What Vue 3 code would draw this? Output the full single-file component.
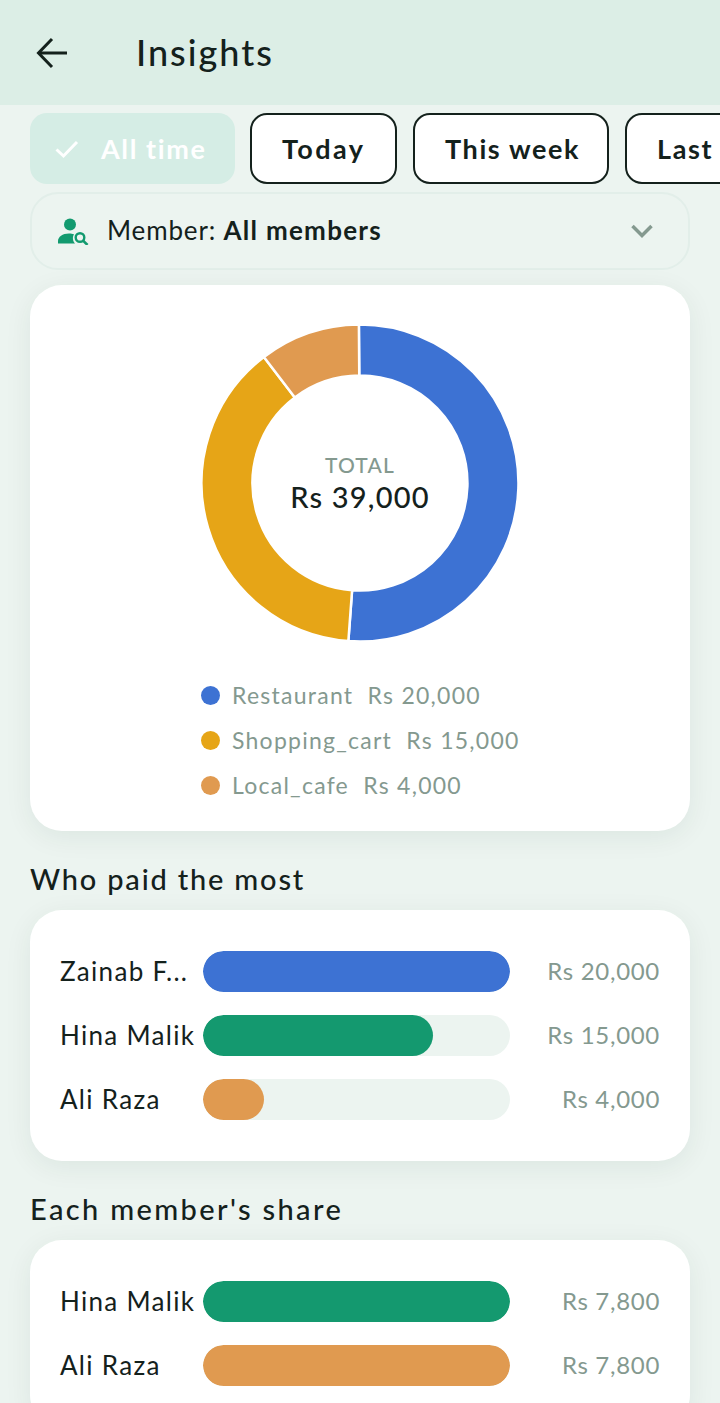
<script setup>
const chips = ['Today', 'This week', 'Last month']

const slices = [
  { name: 'Restaurant', amount: 20000, color: '#3d72d3' },
  { name: 'Shopping_cart', amount: 15000, color: '#e6a517' },
  { name: 'Local_cafe', amount: 4000, color: '#e09a50' },
]
const total = slices.reduce((sum, s) => sum + s.amount, 0)

const fmt = (n) => 'Rs ' + n.toLocaleString('en-US')

// donut segments, clockwise from 12 o'clock
const cx = 160
const cy = 160
const rOut = 158.5
const rIn = 107.5
const point = (r, a) => {
  const t = (a - 90) * Math.PI / 180
  return (cx + r * Math.cos(t)).toFixed(2) + ' ' + (cy + r * Math.sin(t)).toFixed(2)
}
let angle = -0.4
const segments = slices.map((s) => {
  const sweep = s.amount / total * 360
  const start = angle
  const end = angle + sweep
  angle = end
  const large = sweep > 180 ? 1 : 0
  return {
    color: s.color,
    d: `M${point(rOut, start)} A${rOut} ${rOut} 0 ${large} 1 ${point(rOut, end)} L${point(rIn, end)} A${rIn} ${rIn} 0 ${large} 0 ${point(rIn, start)} Z`,
  }
})

const paid = [
  { name: 'Zainab F...', amount: 20000, pct: 100, color: '#3d72d3' },
  { name: 'Hina Malik', amount: 15000, pct: 75, color: '#14996f' },
  { name: 'Ali Raza', amount: 4000, pct: 20, color: '#e09a50' },
]
const share = [
  { name: 'Hina Malik', amount: 7800, pct: 100, color: '#14996f' },
  { name: 'Ali Raza', amount: 7800, pct: 100, color: '#e09a50' },
]
</script>

<template>
  <div class="page">
    <header class="topbar">
      <svg class="back" width="34" height="34" viewBox="0 0 34 34" fill="none" stroke="#14211c" stroke-width="3">
        <path d="M32 17H4" />
        <path d="M17 3 3.500 17 17 31" />
      </svg>
      <h1>Insights</h1>
    </header>

    <div class="chips">
      <div class="chip active">
        <svg width="24" height="20" viewBox="0 0 24 20" fill="none" stroke="#fff" stroke-width="3">
          <path d="M1.500 10.500 8.500 17 22 3" />
        </svg>
        <span>All time</span>
      </div>
      <div v-for="c in chips" :key="c" class="chip">{{ c }}</div>
    </div>

    <div class="member">
      <svg width="32" height="28" viewBox="0 0 32 28" fill="#129a6f">
        <circle cx="13" cy="7.500" r="6" />
        <path d="M1 26.500v-2.500c0-4 4.500-7.500 11-7.500 2 0 3.500.3 5 .8-1.800 3-1.200 6.800 1 9.200H1Z" />
        <circle cx="23" cy="20.500" r="4.300" fill="none" stroke="#129a6f" stroke-width="2.400" />
        <path d="m26.300 23.800 4.200 4.200" fill="none" stroke="#129a6f" stroke-width="2.600" />
      </svg>
      <span class="member-text">Member: <b>All members</b></span>
      <svg class="chev" width="22" height="14" viewBox="0 0 22 14" fill="none" stroke="#84998f" stroke-width="3.500">
        <path d="M1.500 2 11 11.500 20.500 2" />
      </svg>
    </div>

    <section class="card donut-card">
      <div class="donut">
        <svg width="320" height="320" viewBox="0 0 320 320">
          <path v-for="s in segments" :key="s.color" :d="s.d" :fill="s.color" stroke="#fff" stroke-width="2.500" />
        </svg>
        <div class="donut-center">
          <div class="total-label">TOTAL</div>
          <div class="total-value">{{ fmt(total) }}</div>
        </div>
      </div>
      <ul class="legend">
        <li v-for="s in slices" :key="s.name">
          <i class="dot" :style="{ background: s.color }"></i>
          <span>{{ s.name }}&nbsp; {{ fmt(s.amount) }}</span>
        </li>
      </ul>
    </section>

    <h2>Who paid the most</h2>
    <section class="card bars">
      <div v-for="r in paid" :key="r.name" class="row">
        <span class="name">{{ r.name }}</span>
        <div class="track">
          <div class="fill" :style="{ width: r.pct + '%', background: r.color }"></div>
        </div>
        <span class="amount">{{ fmt(r.amount) }}</span>
      </div>
    </section>

    <h2 class="wide">Each member's share</h2>
    <section class="card bars">
      <div v-for="r in share" :key="r.name" class="row">
        <span class="name">{{ r.name }}</span>
        <div class="track">
          <div class="fill" :style="{ width: r.pct + '%', background: r.color }"></div>
        </div>
        <span class="amount">{{ fmt(r.amount) }}</span>
      </div>
    </section>
  </div>
</template>

<style scoped>
.page {
  width: 720px;
  height: 1403px;
  overflow: hidden;
  background: #ecf4f0;
  color: #14211c;
  font-family: Lato, "Noto Sans", sans-serif;
}

.topbar {
  height: 105px;
  background: #dceee6;
  display: flex;
  align-items: center;
  padding-left: 35px;
  gap: 67px;
  box-sizing: border-box;
}
.topbar h1 {
  margin: 0 0 2px;
  font-size: 36px;
  font-weight: 500;
  letter-spacing: 2px;
}

.chips {
  display: flex;
  gap: 16px;
  margin: 8px 0 0 30px;
  white-space: nowrap;
}
.chip {
  flex: none;
  height: 71px;
  box-sizing: border-box;
  border: 2px solid #14211c;
  border-radius: 17px;
  background: #fff;
  padding: 0 30px;
  display: flex;
  align-items: center;
  font-size: 27px;
  font-weight: 700;
  letter-spacing: 1.600px;
}
.chip:nth-child(2) {
  width: 147px;
  letter-spacing: 2.400px;
}
.chip:nth-child(3) {
  width: 196px;
}
.chip.active {
  width: 205px;
  border: none;
  background: #d5ede5;
  color: #fff;
  padding: 0 0 0 25px;
  gap: 22px;
  margin-right: -1px;
}

.member {
  margin: 8px 30px 0;
  height: 78px;
  box-sizing: border-box;
  border: 2px solid #e2eee9;
  border-radius: 28px;
  display: flex;
  align-items: center;
  padding: 0 35px 0 25px;
  gap: 18px;
}
.member-text {
  font-size: 26px;
  flex: 1;
  letter-spacing: 0.850px;
  padding-bottom: 2px;
}
.member-text b {
  font-weight: 700;
  letter-spacing: 1.270px;
}

.card {
  margin: 0 30px;
  background: #fff;
  border-radius: 32px;
  box-shadow: 0 6px 28px rgba(20, 60, 45, 0.07);
}

.donut-card {
  margin-top: 15px;
  height: 546px;
  box-sizing: border-box;
  padding-top: 37.500px;
  display: flex;
  flex-direction: column;
  align-items: center;
}
.donut {
  position: relative;
  width: 320px;
  height: 320px;
}
.donut-center {
  position: absolute;
  inset: 0;
  display: flex;
  flex-direction: column;
  align-items: center;
  justify-content: center;
}
.total-label {
  font-size: 21px;
  font-weight: 500;
  color: #84998f;
  letter-spacing: 1.200px;
}
.total-value {
  font-size: 29px;
  font-weight: 500;
  margin-top: 2px;
  letter-spacing: 1.200px;
}

.legend {
  list-style: none;
  margin: 30px 0 0 171px;
  padding: 0;
  align-self: flex-start;
}
.legend li {
  height: 45px;
  display: flex;
  align-items: center;
  gap: 12px;
  font-size: 23px;
  color: #84998f;
  letter-spacing: 1.250px;
}
.dot {
  width: 19px;
  height: 19px;
  border-radius: 50%;
}

h2 {
  margin: 30px 0 13px 30px;
  font-size: 29px;
  line-height: 36px;
  font-weight: 500;
  letter-spacing: 1.800px;
}
h2.wide {
  letter-spacing: 2.350px;
}

.bars {
  padding: 41px 30px;
  display: flex;
  flex-direction: column;
  gap: 23px;
}
.row {
  display: flex;
  align-items: center;
  height: 41px;
}
.name {
  width: 143px;
  flex: none;
  font-size: 26px;
  white-space: nowrap;
  letter-spacing: 1.300px;
  padding-bottom: 2px;
}
.track {
  width: 307px;
  height: 41px;
  flex: none;
  background: #ecf4f0;
  border-radius: 21px;
  overflow: hidden;
}
.fill {
  height: 100%;
  border-radius: 21px;
}
.amount {
  flex: 1;
  text-align: right;
  font-size: 24px;
  color: #84998f;
  letter-spacing: 0.700px;
  padding-bottom: 2px;
}
</style>
